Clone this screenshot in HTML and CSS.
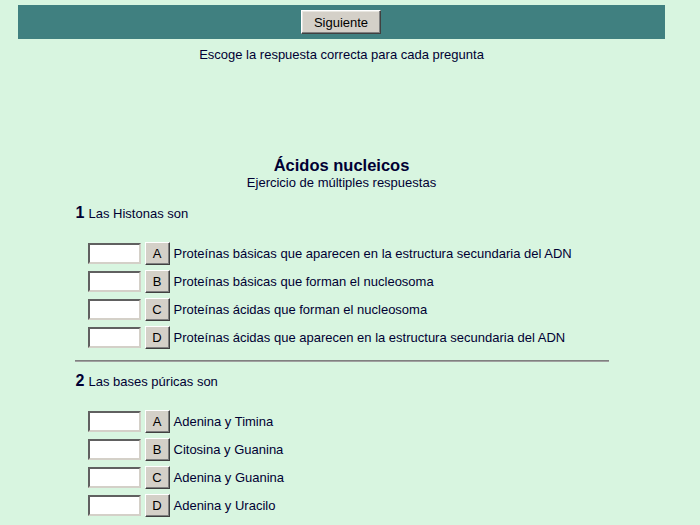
FILE: index.html
```html
<!DOCTYPE html>
<html lang="es">
<head>
<meta charset="utf-8">
<title>Ácidos nucleicos</title>
<link rel="stylesheet" href="styles.css">
</head>
<body>
<div class="page">
  <div class="topbar">
    <button class="btn-next" type="button">Siguiente</button>
  </div>
  <p class="instructions">Escoge la respuesta correcta para cada pregunta</p>

  <div class="heading">
    <h1 class="title">Ácidos nucleicos</h1>
    <p class="subtitle">Ejercicio de múltiples respuestas</p>
  </div>

  <div class="quiz">
    <div class="question">
      <div class="q-head"><span class="q-num">1</span><span class="q-text">Las Histonas son</span></div>
      <div class="options">
        <div class="option"><input class="answer" type="text"><button class="letter" type="button">A</button><span class="opt-text">Proteínas básicas que aparecen en la estructura secundaria del ADN</span></div>
        <div class="option"><input class="answer" type="text"><button class="letter" type="button">B</button><span class="opt-text">Proteínas básicas que forman el nucleosoma</span></div>
        <div class="option"><input class="answer" type="text"><button class="letter" type="button">C</button><span class="opt-text">Proteínas ácidas que forman el nucleosoma</span></div>
        <div class="option"><input class="answer" type="text"><button class="letter" type="button">D</button><span class="opt-text">Proteínas ácidas que aparecen en la estructura secundaria del ADN</span></div>
      </div>
    </div>
    <hr class="sep">
    <div class="question">
      <div class="q-head"><span class="q-num">2</span><span class="q-text">Las bases púricas son</span></div>
      <div class="options">
        <div class="option"><input class="answer" type="text"><button class="letter" type="button">A</button><span class="opt-text">Adenina y Timina</span></div>
        <div class="option"><input class="answer" type="text"><button class="letter" type="button">B</button><span class="opt-text">Citosina y Guanina</span></div>
        <div class="option"><input class="answer" type="text"><button class="letter" type="button">C</button><span class="opt-text">Adenina y Guanina</span></div>
        <div class="option"><input class="answer" type="text"><button class="letter" type="button">D</button><span class="opt-text">Adenina y Uracilo</span></div>
      </div>
    </div>
  </div>
</div>
</body>
</html>
```

FILE: styles.css
```css
html, body {
  margin: 0;
  padding: 0;
  background: #d8f5e0;
}
body {
  font-family: "Liberation Sans", Arial, sans-serif;
  font-size: 13px;
  color: #000033;
}
.page {
  width: 683px;
  padding-top: 5px;
}
.topbar {
  margin: 0 18px;
  height: 34px;
  background: #408080;
  display: flex;
  align-items: center;
  justify-content: center;
}
.btn-next {
  width: 80px;
  height: 24px;
  margin-left: -1px;
  padding: 0;
  font-family: "Liberation Sans", Arial, sans-serif;
  font-size: 13px;
  color: #000;
  background: #d4d0c8;
  border: 1px solid;
  border-color: #ffffff #404040 #404040 #ffffff;
  box-shadow: inset -1px -1px 0 #808080, inset 1px 1px 0 #e8e6e0;
}
.instructions {
  margin: 8px 0 0;
  text-align: center;
  line-height: 15px;
  font-size: 13px;
}
.heading {
  margin-top: 93px;
  text-align: center;
}
.title {
  margin: 0;
  font-size: 16.5px;
  line-height: 20px;
  font-weight: bold;
}
.subtitle {
  margin: 0;
  font-size: 13px;
  line-height: 15px;
}
.quiz {
  width: 534px;
  margin: 14px auto 0;
}
.q-head {
  display: flex;
  align-items: baseline;
  gap: 4px;
  padding-left: 1px;
  line-height: 18px;
}
.q-num {
  font-size: 16px;
  font-weight: bold;
  width: 9px;
}
.q-text {
  font-size: 13px;
}
.options {
  margin-top: 16px;
  padding-left: 13px;
  display: flex;
  flex-direction: column;
}
.option {
  display: flex;
  align-items: center;
  height: 28px;
}
.answer {
  box-sizing: border-box;
  width: 53px;
  height: 21px;
  margin: 0;
  padding: 0;
  background: #fff;
  border: 2px solid;
  border-color: #606060 #d4d0c8 #d4d0c8 #606060;
}
.letter {
  box-sizing: border-box;
  width: 25px;
  height: 23px;
  margin: 0 4px 0 4px;
  padding: 0;
  font-family: "Liberation Sans", Arial, sans-serif;
  font-size: 13px;
  color: #000;
  background: #d4d0c8;
  border: 1px solid;
  border-color: #ffffff #404040 #404040 #ffffff;
  box-shadow: inset -1px -1px 0 #808080;
}
.opt-text {
  font-size: 13px;
}
.sep {
  margin: 9px 0 10px;
  height: 0;
  border: 0;
  border-top: 1px solid #808080;
  border-bottom: 1px solid #a0a0a0;
}
```
